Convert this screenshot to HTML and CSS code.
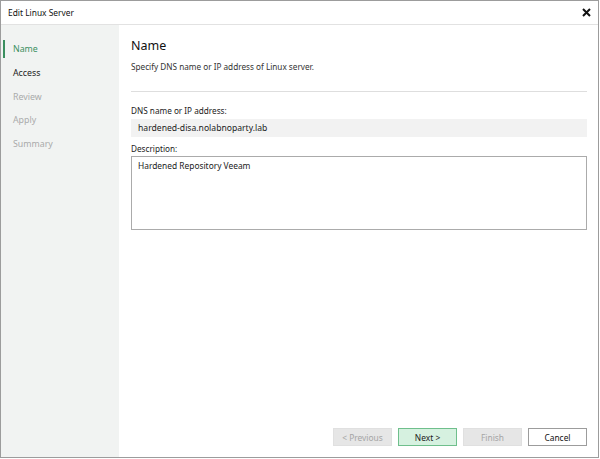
FILE: index.html
```html
<!DOCTYPE html>
<html lang="en">

<head>
  <meta charset="UTF-8" />
  <title>Edit Linux Server</title>
  <meta name="viewport" content="width=device-width, initial-scale=1.0" />
  <link rel="stylesheet" href="styles.css">
</head>

<body>

  <div class="window">
    <div class="titlebar">
      <span class="title">Edit Linux Server</span>
      <svg class="close" width="9" height="9" viewBox="0 0 9 9">
        <path d="M1 1 L8 8 M8 1 L1 8" stroke="#111" stroke-width="2" />
      </svg>
    </div>

    <div class="body">
      <!-- wizard steps -->
      <div class="steps">
        <div class="step active">Name</div>
        <div class="step">Access</div>
        <div class="step disabled">Review</div>
        <div class="step disabled">Apply</div>
        <div class="step disabled">Summary</div>
      </div>

      <div class="main">
        <div class="header">
          <h1>Name</h1>
          <p>Specify DNS name or IP address of Linux server.</p>
        </div>

        <div class="form">
          <label>DNS name or IP address:</label>
          <div class="field">hardened-disa.nolabnoparty.lab</div>

          <label class="desc-label">Description:</label>
          <div class="textarea">Hardened Repository Veeam</div>
        </div>

        <div class="buttons">
          <button class="btn" disabled>&lt; Previous</button>
          <button class="btn primary">Next &gt;</button>
          <button class="btn" disabled>Finish</button>
          <button class="btn cancel">Cancel</button>
        </div>
      </div>
    </div>
  </div>

</body>

</html>
```

FILE: styles.css
```css
/* ─── BASE ───────────────────────────────────────────────────────── */
* {
  box-sizing: border-box;
  margin: 0;
  padding: 0;
}

html,
body {
  width: 600px;
  height: 459px;
  background: #fff;
  font-family: "Noto Sans", "Open Sans", sans-serif;
  font-size: 8.2px;
  color: #222;
  overflow: hidden;
}

/* ─── WINDOW ─────────────────────────────────────────────────────── */
.window {
  width: 599px;
  height: 458px;
  border: 1px solid #9c9c9c;
  display: flex;
  flex-direction: column;
  background: #fff;
}

.titlebar {
  height: 24px;
  flex: none;
  display: flex;
  align-items: center;
  justify-content: space-between;
  padding: 0 7px 0 7px;
  border-bottom: 1px solid #e2e2e2;
}

.title {
  font-size: 8.4px;
  color: #111;
}

.close {
  display: block;
}

.body {
  flex: 1;
  display: flex;
}

/* ─── STEPS SIDEBAR ──────────────────────────────────────────────── */
.steps {
  width: 118px;
  flex: none;
  background: #f1f3f2;
  padding-top: 12px;
  display: flex;
  flex-direction: column;
}

.step {
  height: 23.8px;
  line-height: 24px;
  padding-left: 12px;
  font-size: 8.8px;
  color: #222;
  position: relative;
}

.step.active {
  color: #3b8f5f;
}

.step.active::before {
  content: "";
  position: absolute;
  left: 2px;
  top: 3px;
  width: 2px;
  height: 18px;
  background: #3b8f5f;
}

.step.disabled {
  color: #a9aaaa;
}

/* ─── MAIN ───────────────────────────────────────────────────────── */
.main {
  flex: 1;
  display: flex;
  flex-direction: column;
  padding: 12px 11px 11px 12px;
}

.header {
  border-bottom: 1px solid #dedede;
  height: 55px;
}

.header h1 {
  font-size: 12.5px;
  font-weight: normal;
  color: #111;
  margin-bottom: 7px;
}

.header p {
  color: #333;
}

.form {
  flex: 1;
  display: flex;
  flex-direction: column;
  padding-top: 12px;
}

.form label {
  color: #222;
  line-height: 12px;
  margin-top: 1px;
}

.field {
  margin-top: 2px;
  height: 18px;
  line-height: 18px;
  background: #f2f2f2;
  padding-left: 7px;
  font-size: 8.6px;
  color: #222;
}

.desc-label {
  margin-top: 6px;
}

.form .desc-label {
  margin-top: 6px;
}

.textarea {
  margin-top: 1px;
  height: 74px;
  border: 1px solid #ababab;
  padding: 3px 6px;
  font-size: 8.4px;
  color: #222;
}

/* ─── BUTTONS ────────────────────────────────────────────────────── */
.buttons {
  display: flex;
  justify-content: flex-end;
  gap: 6px;
}

.btn {
  width: 59px;
  height: 18px;
  font-family: inherit;
  font-size: 8.4px;
  background: #e6e6e6;
  border: 1px solid #e0e0e0;
  color: #a5a5a5;
}

.btn.primary {
  background: #d6f1e0;
  border-color: #6fbf8c;
  color: #222;
}

.btn.cancel {
  background: #fff;
  border-color: #9c9c9c;
  color: #111;
}
```
